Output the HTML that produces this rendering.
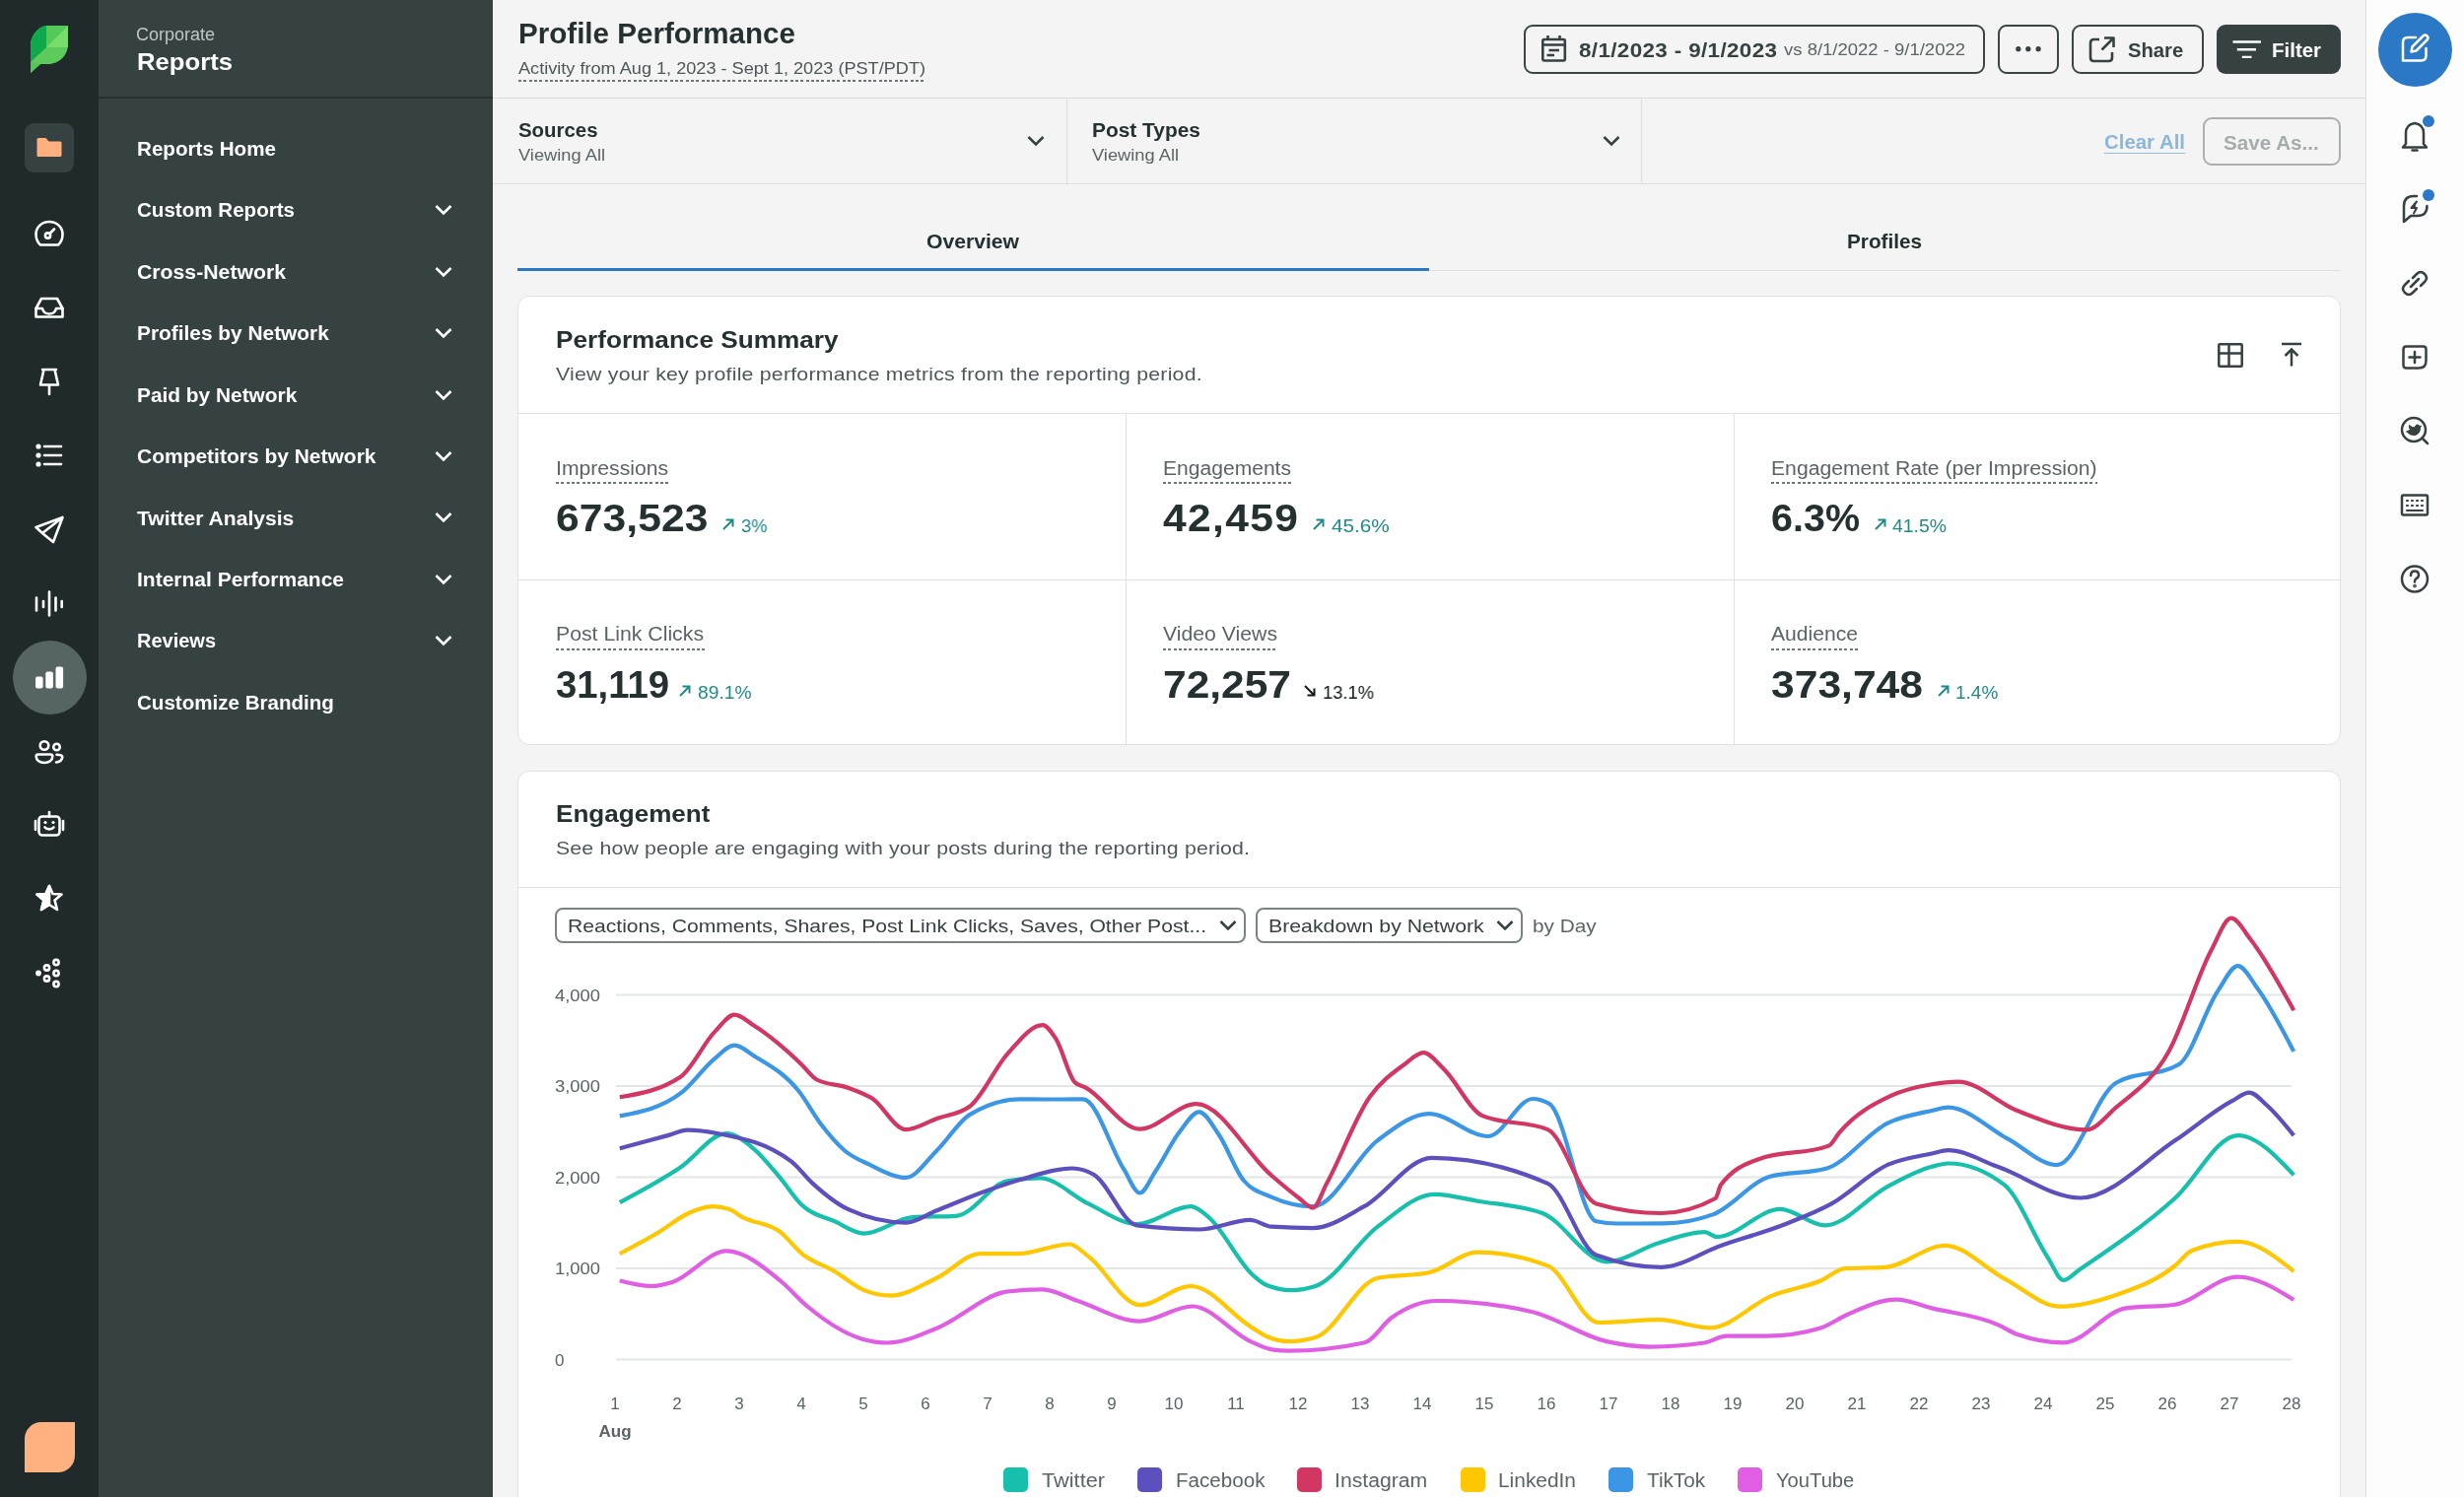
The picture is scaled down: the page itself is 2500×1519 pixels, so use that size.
<!DOCTYPE html>
<html><head><meta charset="utf-8">
<style>
*{box-sizing:border-box;margin:0;padding:0}
html,body{width:2500px;height:1519px;overflow:hidden;background:#f4f4f4}
body{position:relative;font-family:"Liberation Sans",sans-serif}
.t{position:absolute;white-space:nowrap;line-height:1;font-family:"Liberation Sans",sans-serif;will-change:transform}
.abs{position:absolute}
#rail{position:absolute;left:0;top:0;width:100px;height:1519px;background:#212a2b}
#side{position:absolute;left:100px;top:0;width:400px;height:1519px;background:#364141}
#sidehdr{position:absolute;left:100px;top:98px;width:400px;height:2px;background:#273031}
#rrail{position:absolute;left:2400px;top:0;width:100px;height:1519px;background:#fdfdfd;border-left:1px solid #dde0e0}
.hl{position:absolute;height:1px;background:#dcdfdf}
.vl{position:absolute;width:1px;background:#dcdfdf}
.btn{position:absolute;border:2px solid #3a4545;border-radius:9px}
.card{position:absolute;background:#fff;border:1px solid #dfe2e2;border-radius:12px}
.dotu{position:absolute;height:2px;background-image:repeating-linear-gradient(to right,#6d7777 0,#6d7777 3px,transparent 3px,transparent 5.3px)}
.chev,.arr,.ic{position:absolute;overflow:visible}
.sw{position:absolute;top:1488.5px;width:25px;height:25px;border-radius:5px}
.dd{position:absolute;border:2px solid #7b8484;border-radius:8px;top:921px;height:36px}
</style></head><body>
<div id="rail"></div>
<div id="side"></div>
<div id="sidehdr"></div>
<div id="rrail"></div>

<!-- logo -->
<svg class="ic" style="left:0;top:0" width="100" height="100" viewBox="0 0 100 100">
  <path d="M31,46 C31,35 40,26 51,26 L69,26 L69,45 C69,56 60,65 49,65 L41,65 L31,74 Z" fill="#5ccb5c"/>
  <path d="M31,46 C31,35 40,26 47,26 L47,48 L31,63 Z" fill="#0fa84b"/>
  <path d="M47,26 L69,26 L47,48 Z" fill="#55c85a"/>
  <path d="M69,26 L69,45 C69,46 69,47 68.8,48 L47,48 Z" fill="#78dd6b"/>
  <path d="M31,63 L41,65 L31,74 Z" fill="#52c757"/>
</svg>
<!-- folder button -->
<div class="abs" style="left:25px;top:125px;width:50px;height:50px;border-radius:9px;background:#364141"></div>
<svg class="ic" style="left:0;top:100px" width="100" height="100" viewBox="0 0 100 100">
  <path d="M37.5,41.5 Q37.5,40 39,40 L46.5,40 L49.5,43.5 L61,43.5 Q62.5,43.5 62.5,45 L62.5,57.5 Q62.5,59 61,59 L39,59 Q37.5,59 37.5,57.5 Z" fill="#ffb07e"/>
</svg>
<!-- rail icons -->
<svg class="ic" style="left:0;top:0" width="100" height="1519" viewBox="0 0 100 1519" fill="none" stroke="#fff" stroke-width="2.6" stroke-linecap="round" stroke-linejoin="round">
  <!-- gauge -->
  <path d="M41,248.5 L59,248.5 C62,246 63.5,242 63.5,237.5 C63.5,230.5 57.5,225 50,225 C42.5,225 36.5,230.5 36.5,237.5 C36.5,242 38,246 41,248.5 Z"/>
  <circle cx="48.5" cy="239" r="2.6"/><path d="M50.5,237 L55,232.5"/>
  <!-- inbox -->
  <path d="M36.5,313 L36.5,321.5 L63.5,321.5 L63.5,313 L58,303 L42,303 Z"/>
  <path d="M36.5,313 L43,313 C44,317 47,318.5 50,318.5 C53,318.5 56,317 57,313 L63.5,313"/>
  <!-- pin -->
  <path d="M43,375 L57,375 M44.5,375 L41,390.5 L59,390.5 L55.5,375 M50,390.5 L50,400"/>
  <!-- list -->
  <circle cx="39" cy="453" r="1.3" fill="#fff"/><circle cx="39" cy="462" r="1.3" fill="#fff"/><circle cx="39" cy="471" r="1.3" fill="#fff"/>
  <path d="M45,453 L62,453 M45,462 L62,462 M45,471 L62,471"/>
  <!-- plane -->
  <path d="M36.5,535 L63.5,525 L54,550 L43,541 Z M43,541 L63.5,525"/>
  <!-- waveform -->
  <path d="M37,606.5 L37,619.5 M44,610 L44,616 M50,600.5 L50,624.5 M56.5,606.5 L56.5,619.5 M62.7,610 L62.7,616"/>
</svg>
<!-- active reports -->
<div class="abs" style="left:12.5px;top:650px;width:75px;height:75px;border-radius:50%;background:#566464"></div>
<svg class="ic" style="left:0;top:650px" width="100" height="100" viewBox="0 0 100 100" fill="#fff">
  <rect x="36" y="36.4" width="7.6" height="12" rx="2"/>
  <rect x="46.3" y="31.4" width="7.6" height="17" rx="2"/>
  <rect x="56.5" y="26.4" width="7.6" height="22" rx="2"/>
</svg>
<svg class="ic" style="left:0;top:0" width="100" height="1519" viewBox="0 0 100 1519" fill="none" stroke="#fff" stroke-width="2.6" stroke-linecap="round" stroke-linejoin="round">
  <!-- people -->
  <circle cx="45" cy="756.5" r="4.3"/><circle cx="57.5" cy="758" r="3.3"/>
  <path d="M38.8,765.5 L51.2,765.5 Q53.3,765.5 53.3,767.5 C53.3,771.5 49.5,774 45,774 C40.5,774 36.7,771.5 36.7,767.5 Q36.7,765.5 38.8,765.5 Z"/>
  <path d="M57.5,765.8 Q63.5,765.8 63.3,768.3 C62.8,771.3 60.5,773.2 57,773.5"/>
  <!-- robot -->
  <rect x="39.5" y="828.5" width="21" height="19" rx="3.5"/>
  <path d="M50,824 L50,828.5 M36,833 L36,842 M64,833 L64,842"/>
  <circle cx="46" cy="834.5" r="1.6" fill="#fff" stroke="none"/><circle cx="54" cy="834.5" r="1.6" fill="#fff" stroke="none"/>
  <path d="M45.5,839.5 C47.5,842 52.5,842 54.5,839.5"/>
  <!-- star -->
  <path d="M50,899 L53.5,907 L62.5,907.5 L55.5,913.5 L58,923 L50,918 L42,923 L44.5,913.5 L37.5,907.5 L46.5,907 Z"/>
  <path d="M50,899 L50,918 L42,923 L44.5,913.5 L37.5,907.5 L46.5,907 Z" fill="#fff"/>
  <!-- dots -->
  <circle cx="39" cy="987.5" r="1.6" fill="#fff"/>
  <circle cx="47.5" cy="982" r="2.6"/><circle cx="47.5" cy="993" r="2.6"/>
  <circle cx="57" cy="976.5" r="2.6"/><circle cx="57" cy="987.5" r="2.6"/><circle cx="57" cy="998.5" r="2.6"/>
</svg>
<!-- avatar -->
<div class="abs" style="left:25px;top:1443px;width:50.5px;height:51px;background:#ffb27f;border-radius:17px 0 17px 0"></div>

<svg class="chev" style="left:441px;top:207.1px" width="18" height="12" viewBox="0 0 18 12"><path d="M1.5,2 L9,9.5 L16.5,2" fill="none" stroke="#fff" stroke-width="2.6"/></svg><svg class="chev" style="left:441px;top:269.6px" width="18" height="12" viewBox="0 0 18 12"><path d="M1.5,2 L9,9.5 L16.5,2" fill="none" stroke="#fff" stroke-width="2.6"/></svg><svg class="chev" style="left:441px;top:332.1px" width="18" height="12" viewBox="0 0 18 12"><path d="M1.5,2 L9,9.5 L16.5,2" fill="none" stroke="#fff" stroke-width="2.6"/></svg><svg class="chev" style="left:441px;top:394.5px" width="18" height="12" viewBox="0 0 18 12"><path d="M1.5,2 L9,9.5 L16.5,2" fill="none" stroke="#fff" stroke-width="2.6"/></svg><svg class="chev" style="left:441px;top:456.9px" width="18" height="12" viewBox="0 0 18 12"><path d="M1.5,2 L9,9.5 L16.5,2" fill="none" stroke="#fff" stroke-width="2.6"/></svg><svg class="chev" style="left:441px;top:519.4px" width="18" height="12" viewBox="0 0 18 12"><path d="M1.5,2 L9,9.5 L16.5,2" fill="none" stroke="#fff" stroke-width="2.6"/></svg><svg class="chev" style="left:441px;top:581.9px" width="18" height="12" viewBox="0 0 18 12"><path d="M1.5,2 L9,9.5 L16.5,2" fill="none" stroke="#fff" stroke-width="2.6"/></svg><svg class="chev" style="left:441px;top:644.3px" width="18" height="12" viewBox="0 0 18 12"><path d="M1.5,2 L9,9.5 L16.5,2" fill="none" stroke="#fff" stroke-width="2.6"/></svg>

<!-- main header lines -->
<div class="hl" style="left:500px;top:99px;width:1900px"></div>
<div class="dotu" style="left:526px;top:81px;width:413px"></div>
<div class="hl" style="left:500px;top:185.5px;width:1900px"></div>
<div class="vl" style="left:1082px;top:99px;height:87px"></div>
<div class="vl" style="left:1664.5px;top:99px;height:87px"></div>

<!-- header buttons -->
<div class="btn" style="left:1545.5px;top:25px;width:468.5px;height:49.5px"></div>
<svg class="ic" style="left:1560px;top:30px" width="40" height="40" viewBox="0 0 40 40" fill="none" stroke="#364141" stroke-width="2.6" stroke-linecap="butt" stroke-linejoin="round">
  <rect x="5.3" y="10" width="22.5" height="21.5" rx="1.5"/><path d="M5.3,15.5 L27.8,15.5 M10.5,6 L10.5,10 M22.5,6 L22.5,10 M11.5,21 L22,21 M9.5,26 L17,26"/>
</svg>
<div class="btn" style="left:2026.5px;top:25px;width:62px;height:49.5px"></div>
<svg class="ic" style="left:2040px;top:40px" width="40" height="20" viewBox="0 0 40 20" fill="#364141">
  <circle cx="7.8" cy="9.7" r="2.6"/><circle cx="17.8" cy="9.7" r="2.6"/><circle cx="28.1" cy="9.7" r="2.6"/>
</svg>
<div class="btn" style="left:2102px;top:25px;width:133.5px;height:49.5px"></div>
<svg class="ic" style="left:2115px;top:33px" width="36" height="36" viewBox="0 0 36 36" fill="none" stroke="#364141" stroke-width="2.6" stroke-linecap="butt" stroke-linejoin="round">
  <path d="M15,7 L9.5,7 Q6,7 6,10.5 L6,25.5 Q6,29 9.5,29 L24.5,29 Q28,29 28,25.5 L28,20"/>
  <path d="M20,5.5 L29.5,5.5 L29.5,15 M29.5,5.5 L17.5,17.5"/>
</svg>
<div class="abs" style="left:2248.5px;top:25px;width:126px;height:49.5px;border-radius:9px;background:#364141"></div>
<svg class="ic" style="left:2260px;top:35px" width="40" height="30" viewBox="0 0 40 30" fill="none" stroke="#fff" stroke-width="2.4">
  <path d="M5.5,7.5 L34,7.5 M9.8,15.2 L29,15.2 M14.8,22.9 L24.5,22.9"/>
</svg>

<!-- filter bar chevrons -->
<svg class="chev" style="left:1042px;top:137px" width="18" height="12" viewBox="0 0 18 12"><path d="M1.5,2 L9,9.5 L16.5,2" fill="none" stroke="#364141" stroke-width="2.6"/></svg>
<svg class="chev" style="left:1626px;top:137px" width="18" height="12" viewBox="0 0 18 12"><path d="M1.5,2 L9,9.5 L16.5,2" fill="none" stroke="#364141" stroke-width="2.6"/></svg>
<div class="abs" style="left:2135px;top:154.5px;width:82px;height:1.6px;background:#93bcdb"></div>
<div class="abs" style="left:2235px;top:119px;width:140px;height:48.5px;border:2px solid #aab0b0;border-radius:9px"></div>

<!-- tabs -->
<div class="abs" style="left:525px;top:273.5px;width:1850px;height:1.5px;background:#dfe2e2"></div>
<div class="abs" style="left:525px;top:271.5px;width:925px;height:3.5px;background:#2a78c6"></div>

<!-- card 1 -->
<div class="card" style="left:525px;top:300px;width:1850px;height:456px"></div>
<div class="hl" style="left:526px;top:419px;width:1848px;background:#e0e3e3"></div>
<div class="hl" style="left:526px;top:588px;width:1848px;background:#e0e3e3"></div>
<div class="vl" style="left:1142px;top:420px;height:335px;background:#e0e3e3"></div>
<div class="vl" style="left:1759px;top:420px;height:335px;background:#e0e3e3"></div>
<svg class="ic" style="left:2240px;top:340px" width="100" height="40" viewBox="0 0 100 40" fill="none" stroke="#364141" stroke-width="2.5">
  <rect x="11.3" y="9.3" width="23.4" height="22.4" rx="1"/><path d="M11.3,18.5 L34.7,18.5 M21.5,9.3 L21.5,31.7"/>
  <path d="M75,9 L95,9 M85,31.5 L85,14.5 M78.5,21 L85,14.5 L91.5,21"/>
</svg>
<div class="dotu" style="left:563.5px;top:489.4px;width:115.0px"></div><div class="dotu" style="left:1180.0px;top:489.4px;width:131.0px"></div><div class="dotu" style="left:1796.5px;top:489.4px;width:331.5px"></div><div class="dotu" style="left:563.5px;top:657.7px;width:151.0px"></div><div class="dotu" style="left:1180.0px;top:657.7px;width:117.0px"></div><div class="dotu" style="left:1796.5px;top:657.7px;width:89.0px"></div>
<svg class="arr" style="left:732.0px;top:525.4px" width="14" height="14" viewBox="0 0 14 14"><path d="M2,12 L11,3 M4.5,2.5 L11.5,2.5 L11.5,9.5" fill="none" stroke="#1f8a8a" stroke-width="2"/></svg><svg class="arr" style="left:1331.0px;top:525.4px" width="14" height="14" viewBox="0 0 14 14"><path d="M2,12 L11,3 M4.5,2.5 L11.5,2.5 L11.5,9.5" fill="none" stroke="#1f8a8a" stroke-width="2"/></svg><svg class="arr" style="left:1900.5px;top:525.4px" width="14" height="14" viewBox="0 0 14 14"><path d="M2,12 L11,3 M4.5,2.5 L11.5,2.5 L11.5,9.5" fill="none" stroke="#1f8a8a" stroke-width="2"/></svg><svg class="arr" style="left:688.0px;top:694.4px" width="14" height="14" viewBox="0 0 14 14"><path d="M2,12 L11,3 M4.5,2.5 L11.5,2.5 L11.5,9.5" fill="none" stroke="#1f8a8a" stroke-width="2"/></svg><svg class="arr" style="left:1322.0px;top:694.4px" width="14" height="14" viewBox="0 0 14 14"><path d="M2,2 L11,11 M11.5,4.5 L11.5,11.5 L4.5,11.5" fill="none" stroke="#141818" stroke-width="2"/></svg><svg class="arr" style="left:1964.5px;top:694.4px" width="14" height="14" viewBox="0 0 14 14"><path d="M2,12 L11,3 M4.5,2.5 L11.5,2.5 L11.5,9.5" fill="none" stroke="#1f8a8a" stroke-width="2"/></svg>

<!-- card 2 -->
<div class="card" style="left:525px;top:781.5px;width:1850px;height:800px"></div>
<div class="hl" style="left:526px;top:900px;width:1848px;background:#e0e3e3"></div>
<div class="dd" style="left:563px;width:701px"></div>
<svg class="chev" style="left:1237px;top:933px" width="18" height="12" viewBox="0 0 18 12"><path d="M1.5,2 L9,9.5 L16.5,2" fill="none" stroke="#364141" stroke-width="2.6"/></svg>
<div class="dd" style="left:1274px;width:271px"></div>
<svg class="chev" style="left:1518px;top:933px" width="18" height="12" viewBox="0 0 18 12"><path d="M1.5,2 L9,9.5 L16.5,2" fill="none" stroke="#364141" stroke-width="2.6"/></svg>
<svg class="ic" style="left:0;top:0" width="2500" height="1519" viewBox="0 0 2500 1519">
  <g stroke="#e3e6e6" stroke-width="2">
    <path d="M625,1009.4 L2325,1009.4 M625,1101.9 L2325,1101.9 M625,1194.4 L2325,1194.4 M625,1286.9 L2325,1286.9 M625,1379.4 L2325,1379.4"/>
  </g>
  <g fill="none" stroke-width="4.2" stroke-linecap="butt" stroke-linejoin="round">
<path d="M628.8,1220.1 C649.3,1209.2 669.9,1198.2 690.4,1184.5 C705.9,1174.1 721.5,1150.2 737.0,1150.2 C746.1,1150.2 755.2,1157.8 764.3,1165.3 C773.4,1172.8 782.6,1184.6 791.7,1195.4 C799.0,1204.0 806.3,1215.9 813.6,1222.8 C824.6,1233.2 835.5,1234.2 846.5,1239.2 C856.5,1243.7 866.6,1251.6 876.6,1251.6 C893.1,1251.6 909.5,1236.1 926.0,1235.1 C940.7,1234.2 955.4,1234.7 970.1,1233.8 C987.5,1232.8 1004.8,1201.2 1022.2,1198.2 C1033.1,1196.3 1044.1,1195.4 1055.0,1195.4 C1071.4,1195.4 1087.9,1213.6 1104.3,1221.4 C1120.7,1229.2 1137.2,1242.0 1153.6,1242.0 C1171.9,1242.0 1190.1,1224.2 1208.4,1224.2 C1213.9,1224.2 1219.4,1229.6 1224.9,1233.8 C1240.4,1245.7 1255.9,1280.6 1271.4,1294.0 C1275.9,1297.9 1280.5,1302.2 1285.0,1304.0 C1293.4,1307.4 1301.7,1309.1 1310.1,1309.1 C1318.3,1309.1 1326.6,1307.7 1334.8,1305.0 C1355.8,1298.0 1376.8,1260.6 1397.8,1244.7 C1417.0,1230.2 1436.1,1211.9 1455.3,1211.9 C1469.9,1211.9 1484.5,1216.2 1499.1,1218.7 C1521.0,1222.4 1543.0,1222.8 1564.9,1231.0 C1586.6,1239.1 1608.3,1280.3 1630.0,1280.3 C1647.7,1280.3 1665.3,1266.4 1683.0,1261.2 C1698.5,1256.6 1714.1,1250.2 1729.6,1250.2 C1733.7,1250.2 1737.8,1255.1 1741.9,1255.1 C1763.4,1255.1 1784.8,1226.9 1806.3,1226.9 C1821.3,1226.9 1836.4,1243.4 1851.4,1243.4 C1872.9,1243.4 1894.3,1214.7 1915.8,1203.6 C1930.5,1196.0 1945.3,1187.7 1960.0,1183.8 C1965.6,1182.3 1971.1,1180.5 1976.7,1180.5 C1995.6,1180.5 2014.6,1187.7 2033.5,1202.2 C2048.2,1213.4 2062.9,1253.6 2077.6,1275.8 C2082.9,1283.8 2088.3,1299.0 2093.6,1299.0 C2098.9,1299.0 2104.3,1292.0 2109.6,1288.4 C2142.1,1266.5 2174.6,1244.8 2207.1,1215.5 C2228.2,1196.5 2249.4,1152.1 2270.5,1152.1 C2289.4,1152.1 2308.4,1172.2 2327.3,1192.2" stroke="#17bfad"/>
<path d="M628.8,1272.1 C642.0,1265.1 655.3,1258.1 668.5,1250.2 C678.5,1244.2 688.6,1235.4 698.6,1231.0 C706.8,1227.4 715.1,1224.2 723.3,1224.2 C728.8,1224.2 734.2,1225.1 739.7,1226.9 C744.3,1228.4 748.8,1232.6 753.4,1235.1 C766.2,1242.1 778.9,1240.2 791.7,1250.2 C799.0,1255.9 806.3,1266.1 813.6,1272.1 C824.6,1281.1 835.5,1283.4 846.5,1289.9 C856.5,1295.8 866.6,1305.1 876.6,1309.1 C885.7,1312.8 894.9,1314.6 904.0,1314.6 C919.3,1314.6 934.7,1304.2 950.0,1297.0 C964.9,1290.0 979.9,1272.1 994.8,1272.1 C1007.6,1272.1 1020.3,1272.1 1033.1,1272.1 C1050.5,1272.1 1067.8,1262.5 1085.2,1262.5 C1091.6,1262.5 1097.9,1270.3 1104.3,1274.9 C1121.7,1287.6 1139.0,1324.2 1156.4,1324.2 C1173.7,1324.2 1191.1,1305.0 1208.4,1305.0 C1228.5,1305.0 1248.6,1333.6 1268.7,1346.1 C1274.1,1349.5 1279.6,1353.6 1285.0,1356.0 C1292.5,1359.3 1299.9,1361.1 1307.4,1361.1 C1316.5,1361.1 1325.7,1359.7 1334.8,1357.0 C1355.8,1350.7 1376.8,1301.2 1397.8,1296.8 C1415.1,1293.1 1432.5,1295.0 1449.8,1291.3 C1466.2,1287.8 1482.7,1270.7 1499.1,1270.7 C1522.8,1270.7 1546.6,1275.3 1570.3,1284.4 C1587.5,1291.0 1604.8,1342.0 1622.0,1342.0 C1642.3,1342.0 1662.7,1339.2 1683.0,1339.2 C1700.3,1339.2 1717.7,1347.4 1735.0,1347.4 C1756.0,1347.4 1777.0,1323.0 1798.0,1314.6 C1814.4,1308.0 1830.9,1306.6 1847.3,1299.5 C1855.5,1295.9 1863.8,1287.8 1872.0,1287.2 C1885.7,1286.3 1899.4,1286.7 1913.1,1285.8 C1933.2,1284.4 1953.3,1263.9 1973.4,1263.9 C1993.4,1263.9 2013.5,1286.7 2033.5,1297.3 C2052.4,1307.3 2071.3,1325.7 2090.2,1325.7 C2109.1,1325.7 2128.1,1320.6 2147.0,1314.0 C2167.0,1307.0 2187.1,1300.3 2207.1,1284.0 C2212.7,1279.5 2218.2,1271.2 2223.8,1269.0 C2239.4,1262.9 2254.9,1259.9 2270.5,1259.9 C2289.4,1259.9 2308.4,1275.0 2327.3,1290.0" stroke="#fec701"/>
<path d="M628.8,1299.5 C639.3,1302.2 649.8,1305.0 660.3,1305.0 C667.6,1305.0 674.9,1303.1 682.2,1300.9 C700.5,1295.5 718.7,1269.4 737.0,1269.4 C755.2,1269.4 773.5,1284.6 791.7,1299.5 C800.8,1307.0 810.0,1317.9 819.1,1325.5 C837.4,1340.7 855.6,1352.9 873.9,1358.4 C883.0,1361.1 892.2,1362.5 901.3,1362.5 C917.5,1362.5 933.8,1354.3 950.0,1348.0 C974.1,1338.7 998.1,1313.5 1022.2,1310.5 C1034.1,1309.0 1045.9,1308.3 1057.8,1308.3 C1069.7,1308.3 1081.5,1316.1 1093.4,1320.0 C1114.4,1326.9 1135.4,1340.6 1156.4,1340.6 C1174.2,1340.6 1192.0,1325.5 1209.8,1325.5 C1229.4,1325.5 1249.1,1352.4 1268.7,1361.1 C1275.8,1364.2 1282.9,1368.2 1290.0,1369.3 C1295.8,1370.2 1301.6,1370.7 1307.4,1370.7 C1333.0,1370.7 1358.5,1368.0 1384.1,1362.5 C1393.4,1360.5 1402.7,1343.6 1412.0,1337.0 C1427.3,1326.1 1442.7,1320.0 1458.0,1320.0 C1490.0,1320.0 1521.9,1323.7 1553.9,1331.0 C1579.3,1336.8 1604.6,1355.4 1630.0,1361.1 C1644.9,1364.4 1659.9,1366.6 1674.8,1366.6 C1693.1,1366.6 1711.3,1365.2 1729.6,1362.5 C1736.9,1361.4 1744.2,1355.6 1751.5,1355.6 C1765.2,1355.6 1778.9,1355.6 1792.6,1355.6 C1810.8,1355.6 1829.1,1352.9 1847.3,1347.4 C1856.4,1344.7 1865.6,1337.6 1874.7,1333.7 C1891.1,1326.6 1907.6,1318.7 1924.0,1318.7 C1936.0,1318.7 1948.0,1324.5 1960.0,1327.4 C1982.3,1332.8 2004.5,1334.2 2026.8,1344.1 C2033.5,1347.0 2040.1,1351.7 2046.8,1354.1 C2062.4,1359.6 2078.0,1362.4 2093.6,1362.4 C2114.7,1362.4 2135.9,1330.4 2157.0,1327.4 C2173.1,1325.1 2189.3,1326.3 2205.4,1324.0 C2227.1,1321.0 2248.8,1295.7 2270.5,1295.7 C2289.4,1295.7 2308.4,1307.3 2327.3,1319.0" stroke="#e05ee3"/>
<path d="M628.8,1165.3 C645.7,1160.8 662.5,1156.2 679.4,1151.6 C685.3,1150.0 691.3,1146.7 697.2,1146.7 C707.7,1146.7 718.2,1148.2 728.7,1150.2 C753.4,1154.9 778.0,1159.6 802.7,1178.4 C810.0,1184.0 817.3,1194.2 824.6,1200.9 C836.5,1211.7 848.3,1221.4 860.2,1226.9 C879.8,1236.0 899.5,1240.6 919.1,1240.6 C929.4,1240.6 939.7,1232.6 950.0,1228.5 C964.9,1222.6 979.9,1216.0 994.8,1210.5 C1008.5,1205.5 1022.2,1200.7 1035.9,1196.8 C1053.3,1191.9 1070.6,1185.5 1088.0,1185.5 C1095.3,1185.5 1102.7,1187.7 1110.0,1192.0 C1124.5,1200.6 1139.1,1241.5 1153.6,1243.4 C1174.6,1246.1 1195.6,1247.5 1216.6,1247.5 C1234.0,1247.5 1251.3,1237.9 1268.7,1237.9 C1275.8,1237.9 1282.9,1244.2 1290.0,1244.7 C1304.0,1245.6 1318.0,1246.1 1332.0,1246.1 C1349.4,1246.1 1366.7,1233.7 1384.1,1224.2 C1406.9,1211.6 1429.8,1174.9 1452.6,1174.9 C1491.8,1174.9 1531.1,1183.6 1570.3,1200.9 C1586.7,1208.2 1603.2,1267.4 1619.6,1273.5 C1641.6,1281.7 1663.7,1285.8 1685.7,1285.8 C1705.8,1285.8 1725.9,1270.9 1746.0,1263.9 C1767.9,1256.3 1789.8,1250.7 1811.7,1242.0 C1827.2,1235.8 1842.8,1230.0 1858.3,1221.4 C1877.5,1210.8 1896.6,1190.2 1915.8,1181.7 C1930.5,1175.2 1945.3,1173.7 1960.0,1170.5 C1965.6,1169.3 1971.1,1167.1 1976.7,1167.1 C1993.4,1167.1 2010.1,1177.9 2026.8,1183.8 C2054.6,1193.6 2082.5,1215.5 2110.3,1215.5 C2142.6,1215.5 2174.8,1178.4 2207.1,1157.1 C2226.1,1144.5 2245.2,1127.6 2264.2,1117.4 C2270.2,1114.2 2276.2,1108.7 2282.2,1108.7 C2288.2,1108.7 2294.2,1116.4 2300.2,1121.7 C2309.2,1129.7 2318.3,1140.9 2327.3,1152.1" stroke="#5c4fbe"/>
<path d="M628.8,1132.4 C649.8,1128.4 670.8,1124.4 691.8,1108.3 C702.9,1099.8 714.1,1083.0 725.2,1074.1 C731.9,1068.7 738.5,1060.7 745.2,1060.7 C751.9,1060.7 758.5,1067.3 765.2,1071.5 C780.4,1080.8 795.7,1088.5 810.9,1107.8 C818.2,1117.1 825.5,1131.0 832.8,1140.6 C841.0,1151.4 849.3,1161.1 857.5,1168.0 C865.7,1174.8 873.9,1177.8 882.1,1181.7 C894.4,1187.6 906.8,1194.9 919.1,1194.9 C929.4,1194.9 939.7,1178.1 950.0,1168.0 C961.3,1157.0 972.5,1138.1 983.8,1131.1 C1000.7,1120.6 1017.6,1115.4 1034.5,1115.4 C1043.0,1115.4 1051.5,1115.5 1060.0,1115.5 C1066.7,1115.5 1073.3,1115.5 1080.0,1115.5 C1086.3,1115.5 1092.6,1115.4 1098.9,1115.4 C1112.7,1115.4 1126.6,1165.2 1140.4,1186.7 C1145.7,1195.0 1151.1,1210.5 1156.4,1210.5 C1161.7,1210.5 1167.1,1196.3 1172.4,1188.4 C1180.5,1176.4 1188.5,1159.3 1196.6,1148.8 C1203.3,1140.1 1209.9,1128.3 1216.6,1128.3 C1223.3,1128.3 1229.9,1141.6 1236.6,1151.3 C1245.1,1163.6 1253.5,1188.0 1262.0,1198.0 C1271.3,1209.1 1280.7,1210.4 1290.0,1214.6 C1304.0,1220.9 1318.0,1224.2 1332.0,1224.2 C1353.9,1224.2 1375.9,1173.3 1397.8,1157.1 C1415.1,1144.3 1432.5,1130.2 1449.8,1130.2 C1469.9,1130.2 1490.0,1153.0 1510.1,1153.0 C1525.1,1153.0 1540.0,1115.0 1555.0,1115.0 C1560.7,1115.0 1566.3,1116.7 1572.0,1120.0 C1587.9,1129.3 1603.7,1235.6 1619.6,1239.2 C1626.4,1240.7 1633.2,1241.5 1640.0,1241.5 C1656.2,1241.5 1672.3,1241.5 1688.5,1241.4 C1704.9,1241.3 1721.4,1238.4 1737.8,1232.4 C1757.0,1225.4 1776.1,1199.5 1795.3,1194.0 C1814.5,1188.5 1833.6,1191.3 1852.8,1185.8 C1873.8,1179.8 1894.8,1149.1 1915.8,1139.3 C1930.5,1132.4 1945.3,1130.2 1960.0,1127.0 C1965.6,1125.8 1971.1,1123.7 1976.7,1123.7 C1996.7,1123.7 2016.8,1144.8 2036.8,1155.4 C2053.5,1164.3 2070.2,1182.1 2086.9,1182.1 C2106.9,1182.1 2127.0,1110.3 2147.0,1098.7 C2168.1,1086.4 2189.3,1092.6 2210.4,1080.3 C2223.8,1072.5 2237.1,1024.6 2250.5,1005.1 C2257.2,995.4 2263.8,980.1 2270.5,980.1 C2277.2,980.1 2283.8,994.0 2290.5,1003.0 C2302.8,1019.6 2315.0,1043.3 2327.3,1066.9" stroke="#3b97e6"/>
<path d="M628.8,1113.3 C649.3,1109.9 669.9,1106.4 690.4,1092.7 C702.0,1084.9 713.6,1058.9 725.2,1046.9 C731.9,1040.1 738.5,1029.7 745.2,1029.7 C751.9,1029.7 758.5,1036.6 765.2,1040.8 C781.3,1051.0 797.5,1065.0 813.6,1080.4 C818.6,1085.2 823.7,1092.9 828.7,1095.5 C839.2,1101.0 849.7,1099.9 860.2,1103.7 C868.4,1106.7 876.7,1109.3 884.9,1114.6 C896.3,1121.9 907.7,1146.1 919.1,1146.1 C929.4,1146.1 939.7,1138.9 950.0,1135.2 C961.3,1131.1 972.5,1131.1 983.8,1122.8 C996.6,1113.4 1009.4,1083.4 1022.2,1069.4 C1034.1,1056.4 1045.9,1040.1 1057.8,1040.1 C1062.4,1040.1 1066.9,1047.3 1071.5,1054.4 C1077.9,1064.4 1084.2,1091.8 1090.6,1098.2 C1094.3,1101.9 1097.9,1101.7 1101.6,1103.7 C1119.9,1113.6 1138.1,1145.6 1156.4,1145.6 C1175.6,1145.6 1194.7,1120.1 1213.9,1120.1 C1239.3,1120.1 1264.6,1170.9 1290.0,1192.7 C1299.3,1200.7 1308.7,1208.8 1318.0,1215.7 C1322.7,1219.2 1327.3,1225.6 1332.0,1225.6 C1336.7,1225.6 1341.3,1209.5 1346.0,1201.0 C1360.5,1174.6 1375.1,1133.9 1389.6,1113.3 C1401.2,1096.9 1412.7,1089.0 1424.3,1080.5 C1431.0,1075.6 1437.6,1068.1 1444.3,1068.1 C1451.0,1068.1 1457.6,1077.9 1464.3,1084.1 C1477.7,1096.6 1491.2,1126.8 1504.6,1132.4 C1526.5,1141.5 1548.4,1137.0 1570.3,1146.1 C1586.7,1153.0 1603.2,1216.6 1619.6,1221.4 C1641.6,1227.8 1663.7,1231.0 1685.7,1231.0 C1704.0,1231.0 1722.2,1226.0 1740.5,1216.0 C1742.3,1215.0 1744.2,1204.8 1746.0,1202.3 C1758.8,1184.9 1771.5,1181.1 1784.3,1176.2 C1808.0,1167.1 1831.8,1171.7 1855.5,1162.6 C1859.2,1161.2 1862.8,1153.1 1866.5,1148.9 C1883.8,1128.9 1901.2,1120.1 1918.5,1111.9 C1932.3,1105.4 1946.2,1102.6 1960.0,1100.3 C1968.9,1098.8 1977.8,1097.7 1986.7,1097.7 C2006.7,1097.7 2026.8,1119.2 2046.8,1127.0 C2070.2,1136.1 2093.5,1146.4 2116.9,1146.4 C2126.9,1146.4 2137.0,1132.4 2147.0,1123.7 C2164.8,1108.3 2182.6,1098.8 2200.4,1067.0 C2214.9,1041.1 2229.3,990.4 2243.8,963.7 C2250.5,951.4 2257.1,931.7 2263.8,931.7 C2270.5,931.7 2277.1,945.3 2283.8,953.8 C2298.3,972.3 2312.8,998.7 2327.3,1025.2" stroke="#d13762"/>
  </g>
</svg>
<div class="sw" style="left:1018.3px;background:#17bfad"></div><div class="sw" style="left:1154.1px;background:#5c4fbe"></div><div class="sw" style="left:1316.3px;background:#d13762"></div><div class="sw" style="left:1482.1px;background:#fec701"></div><div class="sw" style="left:1632.2px;background:#3b97e6"></div><div class="sw" style="left:1763.3px;background:#e05ee3"></div>

<!-- right rail -->
<div class="abs" style="left:2412.5px;top:12.5px;width:75px;height:75px;border-radius:50%;background:#2a78c6"></div>
<svg class="ic" style="left:2400px;top:0" width="100" height="650" viewBox="0 0 100 650" fill="none" stroke="#364141" stroke-width="2.5" stroke-linecap="round" stroke-linejoin="round">
  <!-- compose -->
  <path d="M51,38 L43,38 Q38,38 38,43 L38,61.5 L56.5,61.5 Q61.5,61.5 61.5,56.5 L61.5,49" stroke="#fff"/>
  <path d="M58.5,36.5 Q60.5,34.5 62.5,36.5 Q64.5,38.5 62.5,40.5 L51.5,51.5 L46.5,52.5 L47.5,47.5 Z" stroke="#fff"/>
  <!-- bell -->
  <path d="M38,149.5 L62,149.5 L59,146 L59,135 Q59,126.5 50,125 Q41,126.5 41,135 L41,146 Z"/>
  <path d="M47.5,152.5 L52.5,152.5"/>
  <!-- chat lightning -->
  <path d="M39,225 L39,209 Q39,199 49,199 L52,199 M62.5,209 Q62.5,219 52.5,219 L46,219 L39,225"/>
  <path d="M52,204.5 L46.5,211 L52,211 L49,216.5" fill="#364141" stroke-width="2"/>
  <!-- link -->
  <path d="M48,282 L52,278 Q56,274 60,278 Q64,282 60,286 L56,290"/>
  <path d="M52,293 L48,297 Q44,301 40,297 Q36,293 40,289 L44,285 M46,291 L54,283"/>
  <!-- plus box -->
  <path d="M41.5,351.5 L58.5,351.5 Q61.5,351.5 61.5,354.5 L61.5,366 Q61.5,373.5 54,373.5 L41.5,373.5 Q38.5,373.5 38.5,370.5 L38.5,354.5 Q38.5,351.5 41.5,351.5 Z"/>
  <path d="M50,357 L50,368 M44.5,362.5 L55.5,362.5"/>
  <!-- twitter search -->
  <circle cx="49" cy="436" r="12"/><path d="M57.5,444.5 L63,450"/>
  <path d="M42,438 Q45,442 50,441.5 Q55.5,440.5 55.5,434 L56.5,432 L55,432.5 Q54,430.5 52,431 Q50,432 50.5,434 Q47,434 44.5,431.5 Q43.5,434.5 46,436 Q44,436.5 42,438 Z" fill="#364141" stroke-width="1"/>
  <!-- keyboard -->
  <rect x="37" y="502.5" width="26" height="20" rx="1.5"/>
  <path d="M42,508 L43,508 M47,508 L48,508 M52,508 L53,508 M57,508 L58,508 M42,513 L43,513 M47,513 L48,513 M52,513 L53,513 M57,513 L58,513 M42,518 L58,518" stroke-width="2.2"/>
  <!-- help -->
  <circle cx="50" cy="587.5" r="13"/>
  <path d="M46,584 Q46,579.5 50,579.5 Q54,579.5 54,583.5 Q54,586 51.5,587 Q50,588 50,590.5"/>
  <circle cx="50" cy="594.5" r="0.6" fill="#364141"/>
</svg>
<div class="abs" style="left:2458px;top:117px;width:12px;height:12px;border-radius:50%;background:#2a78c6"></div>
<div class="abs" style="left:2458px;top:192.3px;width:12px;height:12px;border-radius:50%;background:#2a78c6"></div>

<div class="t" style="left:138.3px;top:25.8px;font-size:18px;color:#c0c6c6;">Corporate</div>
<div class="t" style="left:138.5px;top:51.3px;font-size:24.5px;color:#ffffff;font-weight:700;transform:scaleX(1.0478);transform-origin:0 0;">Reports</div>
<div class="t" style="left:138.5px;top:140.8px;font-size:20px;color:#ffffff;font-weight:700;transform:scaleX(1.0314);transform-origin:0 0;">Reports Home</div>
<div class="t" style="left:138.5px;top:203.2px;font-size:20px;color:#ffffff;font-weight:700;transform:scaleX(1.0284);transform-origin:0 0;">Custom Reports</div>
<div class="t" style="left:138.5px;top:265.7px;font-size:20px;color:#ffffff;font-weight:700;transform:scaleX(1.0614);transform-origin:0 0;">Cross-Network</div>
<div class="t" style="left:138.5px;top:328.1px;font-size:20px;color:#ffffff;font-weight:700;transform:scaleX(1.0433);transform-origin:0 0;">Profiles by Network</div>
<div class="t" style="left:138.5px;top:390.6px;font-size:20px;color:#ffffff;font-weight:700;transform:scaleX(1.0430);transform-origin:0 0;">Paid by Network</div>
<div class="t" style="left:138.5px;top:453.0px;font-size:20px;color:#ffffff;font-weight:700;transform:scaleX(1.0491);transform-origin:0 0;">Competitors by Network</div>
<div class="t" style="left:138.5px;top:515.5px;font-size:20px;color:#ffffff;font-weight:700;transform:scaleX(1.0539);transform-origin:0 0;">Twitter Analysis</div>
<div class="t" style="left:138.5px;top:577.9px;font-size:20px;color:#ffffff;font-weight:700;transform:scaleX(1.0496);transform-origin:0 0;">Internal Performance</div>
<div class="t" style="left:138.5px;top:640.4px;font-size:20px;color:#ffffff;font-weight:700;">Reviews</div>
<div class="t" style="left:138.5px;top:702.8px;font-size:20px;color:#ffffff;font-weight:700;transform:scaleX(1.0280);transform-origin:0 0;">Customize Branding</div>
<div class="t" style="left:526.0px;top:19.0px;font-size:29.5px;color:#253030;font-weight:700;transform:scaleX(1.0023);transform-origin:0 0;">Profile Performance</div>
<div class="t" style="left:526.0px;top:60.6px;font-size:17px;color:#4d5757;transform:scaleX(1.0661);transform-origin:0 0;">Activity from Aug 1, 2023 - Sept 1, 2023 (PST/PDT)</div>
<div class="t" style="left:1602.3px;top:40.6px;font-size:20px;color:#364141;font-weight:700;letter-spacing:0.33px;transform:scaleX(1.1200);transform-origin:0 0;">8/1/2023 - 9/1/2023</div>
<div class="t" style="left:1809.8px;top:42.1px;font-size:17px;color:#5a6464;transform:scaleX(1.0876);transform-origin:0 0;">vs 8/1/2022 - 9/1/2022</div>
<div class="t" style="left:2158.8px;top:41.0px;font-size:20px;color:#364141;font-weight:700;transform:scaleX(1.0109);transform-origin:0 0;">Share</div>
<div class="t" style="left:2305.3px;top:41.0px;font-size:20px;color:#ffffff;font-weight:700;transform:scaleX(1.0244);transform-origin:0 0;">Filter</div>
<div class="t" style="left:526.0px;top:122.1px;font-size:20px;color:#253030;font-weight:700;transform:scaleX(1.0198);transform-origin:0 0;">Sources</div>
<div class="t" style="left:526.0px;top:149.3px;font-size:17px;color:#5a6464;transform:scaleX(1.0744);transform-origin:0 0;">Viewing All</div>
<div class="t" style="left:1108.0px;top:122.1px;font-size:20px;color:#253030;font-weight:700;transform:scaleX(1.0454);transform-origin:0 0;">Post Types</div>
<div class="t" style="left:1108.0px;top:149.3px;font-size:17px;color:#5a6464;transform:scaleX(1.0744);transform-origin:0 0;">Viewing All</div>
<div class="t" style="left:2135.0px;top:133.9px;font-size:20px;color:#8db7d8;font-weight:700;transform:scaleX(1.0198);transform-origin:0 0;">Clear All</div>
<div class="t" style="left:2256.0px;top:134.6px;font-size:20px;color:#a6abab;font-weight:700;transform:scaleX(1.0313);transform-origin:0 0;">Save As...</div>
<div class="t" style="left:940.0px;top:234.6px;font-size:20.5px;color:#253030;font-weight:700;transform:scaleX(1.0310);transform-origin:0 0;">Overview</div>
<div class="t" style="left:1874.0px;top:234.6px;font-size:20.5px;color:#253030;font-weight:700;transform:scaleX(1.0106);transform-origin:0 0;">Profiles</div>
<div class="t" style="left:563.7px;top:332.7px;font-size:24px;color:#253030;font-weight:700;transform:scaleX(1.0903);transform-origin:0 0;">Performance Summary</div>
<div class="t" style="left:563.7px;top:369.9px;font-size:19px;color:#4d5757;letter-spacing:0.20px;transform:scaleX(1.1200);transform-origin:0 0;">View your key profile performance metrics from the reporting period.</div>
<div class="t" style="left:563.5px;top:464.5px;font-size:20px;color:#5a6464;transform:scaleX(1.0574);transform-origin:0 0;">Impressions</div>
<div class="t" style="left:563.5px;top:507.2px;font-size:38px;color:#253030;font-weight:700;letter-spacing:0.10px;transform:scaleX(1.1200);transform-origin:0 0;">673,523</div>
<div class="t" style="left:751.5px;top:524.3px;font-size:19px;color:#1f8a8a;letter-spacing:-0.05px;transform:scaleX(0.9700);transform-origin:0 0;">3%</div>
<div class="t" style="left:1180.0px;top:464.5px;font-size:20px;color:#5a6464;transform:scaleX(1.0533);transform-origin:0 0;">Engagements</div>
<div class="t" style="left:1180.0px;top:507.2px;font-size:38px;color:#253030;font-weight:700;letter-spacing:1.22px;transform:scaleX(1.1200);transform-origin:0 0;">42,459</div>
<div class="t" style="left:1350.5px;top:524.3px;font-size:19px;color:#1f8a8a;transform:scaleX(1.0914);transform-origin:0 0;">45.6%</div>
<div class="t" style="left:1796.5px;top:464.5px;font-size:20px;color:#5a6464;transform:scaleX(1.0580);transform-origin:0 0;">Engagement Rate (per Impression)</div>
<div class="t" style="left:1796.5px;top:507.2px;font-size:38px;color:#253030;font-weight:700;transform:scaleX(1.0390);transform-origin:0 0;">6.3%</div>
<div class="t" style="left:1920.0px;top:524.3px;font-size:19px;color:#1f8a8a;transform:scaleX(1.0209);transform-origin:0 0;">41.5%</div>
<div class="t" style="left:563.5px;top:632.8px;font-size:20px;color:#5a6464;transform:scaleX(1.0627);transform-origin:0 0;">Post Link Clicks</div>
<div class="t" style="left:563.5px;top:676.2px;font-size:38px;color:#253030;font-weight:700;transform:scaleX(1.0075);transform-origin:0 0;">31,119</div>
<div class="t" style="left:707.5px;top:693.3px;font-size:19px;color:#1f8a8a;transform:scaleX(1.0116);transform-origin:0 0;">89.1%</div>
<div class="t" style="left:1180.0px;top:632.8px;font-size:20px;color:#5a6464;transform:scaleX(1.0609);transform-origin:0 0;">Video Views</div>
<div class="t" style="left:1180.0px;top:676.2px;font-size:38px;color:#253030;font-weight:700;transform:scaleX(1.1184);transform-origin:0 0;">72,257</div>
<div class="t" style="left:1341.5px;top:693.3px;font-size:19px;color:#141818;letter-spacing:-0.07px;transform:scaleX(0.9700);transform-origin:0 0;">13.1%</div>
<div class="t" style="left:1796.5px;top:632.8px;font-size:20px;color:#5a6464;transform:scaleX(1.0551);transform-origin:0 0;">Audience</div>
<div class="t" style="left:1796.5px;top:676.2px;font-size:38px;color:#253030;font-weight:700;letter-spacing:0.02px;transform:scaleX(1.1200);transform-origin:0 0;">373,748</div>
<div class="t" style="left:1984.0px;top:693.3px;font-size:19px;color:#1f8a8a;transform:scaleX(0.9928);transform-origin:0 0;">1.4%</div>
<div class="t" style="left:563.7px;top:813.8px;font-size:24px;color:#253030;font-weight:700;transform:scaleX(1.0859);transform-origin:0 0;">Engagement</div>
<div class="t" style="left:563.7px;top:850.9px;font-size:19px;color:#4d5757;letter-spacing:0.15px;transform:scaleX(1.1200);transform-origin:0 0;">See how people are engaging with your posts during the reporting period.</div>
<div class="t" style="left:576.4px;top:929.5px;font-size:19px;color:#364141;transform:scaleX(1.1117);transform-origin:0 0;">Reactions, Comments, Shares, Post Link Clicks, Saves, Other Post...</div>
<div class="t" style="left:1287.0px;top:929.5px;font-size:19px;color:#364141;transform:scaleX(1.1194);transform-origin:0 0;">Breakdown by Network</div>
<div class="t" style="left:1555.0px;top:929.5px;font-size:19px;color:#5a6464;transform:scaleX(1.0940);transform-origin:0 0;">by Day</div>
<div class="t" style="left:563.0px;top:1001.5px;font-size:17px;color:#5a6464;transform:scaleX(1.0812);transform-origin:0 0;">4,000</div>
<div class="t" style="left:563.0px;top:1094.0px;font-size:17px;color:#5a6464;transform:scaleX(1.0812);transform-origin:0 0;">3,000</div>
<div class="t" style="left:563.0px;top:1186.5px;font-size:17px;color:#5a6464;transform:scaleX(1.0812);transform-origin:0 0;">2,000</div>
<div class="t" style="left:563.0px;top:1279.0px;font-size:17px;color:#5a6464;transform:scaleX(1.0812);transform-origin:0 0;">1,000</div>
<div class="t" style="left:563.0px;top:1371.5px;font-size:17px;color:#5a6464;">0</div>
<div class="t" style="left:624.0px;top:1416.1px;font-size:17px;color:#5a6464;transform:translateX(-50%);">1</div>
<div class="t" style="left:687.0px;top:1416.1px;font-size:17px;color:#5a6464;transform:translateX(-50%);">2</div>
<div class="t" style="left:750.0px;top:1416.1px;font-size:17px;color:#5a6464;transform:translateX(-50%);">3</div>
<div class="t" style="left:813.0px;top:1416.1px;font-size:17px;color:#5a6464;transform:translateX(-50%);">4</div>
<div class="t" style="left:876.0px;top:1416.1px;font-size:17px;color:#5a6464;transform:translateX(-50%);">5</div>
<div class="t" style="left:939.0px;top:1416.1px;font-size:17px;color:#5a6464;transform:translateX(-50%);">6</div>
<div class="t" style="left:1002.0px;top:1416.1px;font-size:17px;color:#5a6464;transform:translateX(-50%);">7</div>
<div class="t" style="left:1065.0px;top:1416.1px;font-size:17px;color:#5a6464;transform:translateX(-50%);">8</div>
<div class="t" style="left:1128.0px;top:1416.1px;font-size:17px;color:#5a6464;transform:translateX(-50%);">9</div>
<div class="t" style="left:1191.0px;top:1416.1px;font-size:17px;color:#5a6464;transform:translateX(-50%);">10</div>
<div class="t" style="left:1254.0px;top:1416.1px;font-size:17px;color:#5a6464;transform:translateX(-50%);">11</div>
<div class="t" style="left:1317.0px;top:1416.1px;font-size:17px;color:#5a6464;transform:translateX(-50%);">12</div>
<div class="t" style="left:1380.0px;top:1416.1px;font-size:17px;color:#5a6464;transform:translateX(-50%);">13</div>
<div class="t" style="left:1443.0px;top:1416.1px;font-size:17px;color:#5a6464;transform:translateX(-50%);">14</div>
<div class="t" style="left:1506.0px;top:1416.1px;font-size:17px;color:#5a6464;transform:translateX(-50%);">15</div>
<div class="t" style="left:1569.0px;top:1416.1px;font-size:17px;color:#5a6464;transform:translateX(-50%);">16</div>
<div class="t" style="left:1632.0px;top:1416.1px;font-size:17px;color:#5a6464;transform:translateX(-50%);">17</div>
<div class="t" style="left:1695.0px;top:1416.1px;font-size:17px;color:#5a6464;transform:translateX(-50%);">18</div>
<div class="t" style="left:1758.0px;top:1416.1px;font-size:17px;color:#5a6464;transform:translateX(-50%);">19</div>
<div class="t" style="left:1821.0px;top:1416.1px;font-size:17px;color:#5a6464;transform:translateX(-50%);">20</div>
<div class="t" style="left:1884.0px;top:1416.1px;font-size:17px;color:#5a6464;transform:translateX(-50%);">21</div>
<div class="t" style="left:1947.0px;top:1416.1px;font-size:17px;color:#5a6464;transform:translateX(-50%);">22</div>
<div class="t" style="left:2010.0px;top:1416.1px;font-size:17px;color:#5a6464;transform:translateX(-50%);">23</div>
<div class="t" style="left:2073.0px;top:1416.1px;font-size:17px;color:#5a6464;transform:translateX(-50%);">24</div>
<div class="t" style="left:2136.0px;top:1416.1px;font-size:17px;color:#5a6464;transform:translateX(-50%);">25</div>
<div class="t" style="left:2199.0px;top:1416.1px;font-size:17px;color:#5a6464;transform:translateX(-50%);">26</div>
<div class="t" style="left:2262.0px;top:1416.1px;font-size:17px;color:#5a6464;transform:translateX(-50%);">27</div>
<div class="t" style="left:2325.0px;top:1416.1px;font-size:17px;color:#5a6464;transform:translateX(-50%);">28</div>
<div class="t" style="left:624.0px;top:1444.1px;font-size:17px;color:#5a6464;font-weight:700;transform:translateX(-50%);">Aug</div>
<div class="t" style="left:1056.6px;top:1491.7px;font-size:20px;color:#5a6464;transform:scaleX(1.0865);transform-origin:0 0;">Twitter</div>
<div class="t" style="left:1192.5px;top:1491.7px;font-size:20px;color:#5a6464;transform:scaleX(1.0302);transform-origin:0 0;">Facebook</div>
<div class="t" style="left:1354.3px;top:1491.7px;font-size:20px;color:#5a6464;transform:scaleX(1.0592);transform-origin:0 0;">Instagram</div>
<div class="t" style="left:1520.0px;top:1491.7px;font-size:20px;color:#5a6464;transform:scaleX(1.0446);transform-origin:0 0;">LinkedIn</div>
<div class="t" style="left:1670.6px;top:1491.7px;font-size:20px;color:#5a6464;transform:scaleX(1.0360);transform-origin:0 0;">TikTok</div>
<div class="t" style="left:1801.7px;top:1491.7px;font-size:20px;color:#5a6464;transform:scaleX(1.0090);transform-origin:0 0;">YouTube</div>
</body></html>
